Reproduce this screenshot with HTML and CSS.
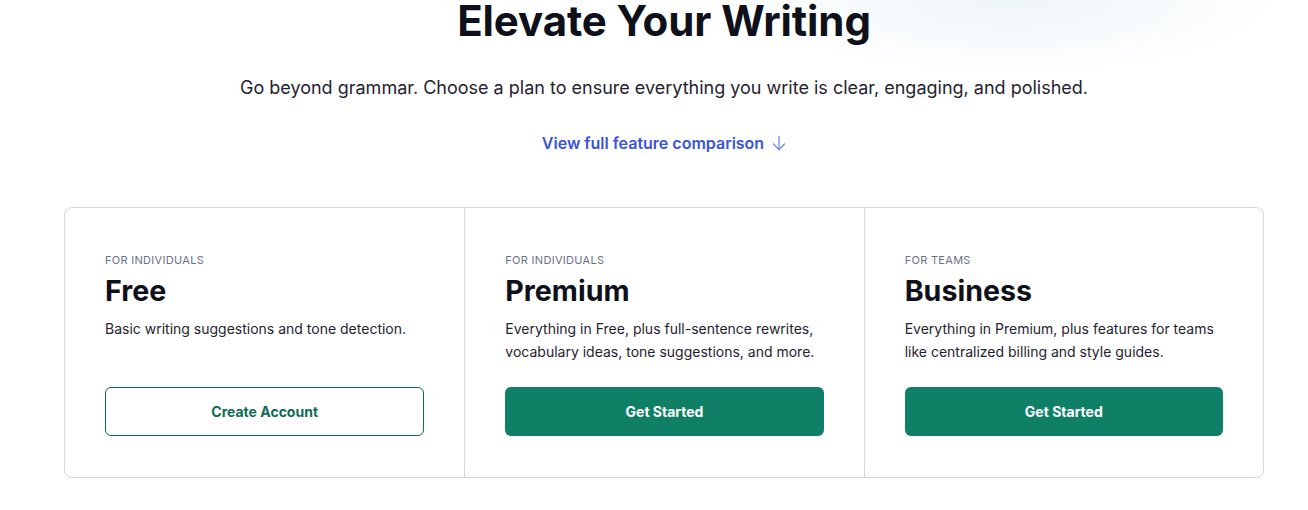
FILE: index.html
```html
<!DOCTYPE html>
<html lang="en">
<head>
<meta charset="utf-8">
<title>Plans</title>
<link rel="stylesheet" href="styles.css">
</head>
<body>
<main class="page">
  <header class="hero">
    <h1 class="hero-title">Elevate Your Writing</h1>
    <p class="hero-sub">Go beyond grammar. Choose a plan to ensure everything you write is clear, engaging, and polished.</p>
    <a class="compare-link" href="#">View full feature comparison
      <svg class="arrow" width="14" height="16" viewBox="0 0 14 16" fill="none" stroke="currentColor" stroke-width="1.3" stroke-linecap="round" stroke-linejoin="round"><path d="M7 1.5v13"/><path d="M1.5 9l5.5 5.5L12.5 9"/></svg>
    </a>
  </header>
  <section class="plans">
    <div class="plan">
      <div class="plan-label">For individuals</div>
      <h2 class="plan-name">Free</h2>
      <p class="plan-desc">Basic writing suggestions and tone detection.</p>
      <a class="btn btn-outline" href="#">Create Account</a>
    </div>
    <div class="plan">
      <div class="plan-label">For individuals</div>
      <h2 class="plan-name">Premium</h2>
      <p class="plan-desc">Everything in Free, plus full-sentence rewrites, vocabulary ideas, tone suggestions, and more.</p>
      <a class="btn btn-solid" href="#">Get Started</a>
    </div>
    <div class="plan">
      <div class="plan-label">For teams</div>
      <h2 class="plan-name">Business</h2>
      <p class="plan-desc">Everything in Premium, plus features for teams like centralized billing and style guides.</p>
      <a class="btn btn-solid" href="#">Get Started</a>
    </div>
  </section>
</main>
</body>
</html>
```
FILE: styles.css
```css
* { box-sizing: border-box; }
html, body { margin: 0; padding: 0; }
body {
  font-family: Inter, "Noto Sans", sans-serif;
  color: #0e101a;
  background: #fff;
  height: 510px;
  overflow: hidden;
  background-image: radial-gradient(ellipse 270px 75px at 1010px 0px, rgba(226, 238, 246, 0.6), rgba(255,255,255,0) 100%);
}
.page {
  display: flex;
  flex-direction: column;
  align-items: center;
  padding-left: 20px;
}
.hero {
  display: flex;
  flex-direction: column;
  align-items: center;
  margin-top: -6px;
}
.hero-title {
  margin: 0;
  font-size: 42px;
  line-height: 53px;
  font-weight: 700;
  letter-spacing: -0.1px;
  color: #0e101a;
}
.hero-sub {
  margin: 27px 0 0;
  font-size: 18px;
  line-height: 28px;
  color: #1f2330;
}
.compare-link {
  margin-top: 29px;
  display: flex;
  align-items: center;
  gap: 8px;
  font-size: 16px;
  font-weight: 600;
  color: #3a54d6;
  text-decoration: none;
  line-height: 24px;
}
.arrow { color: #6f86e6; }
.plans {
  margin-top: 52px;
  width: 1200px;
  display: grid;
  grid-template-columns: repeat(3, 1fr);
  border: 1px solid #d3d6e2;
  border-radius: 8px;
}
.plan {
  padding: 45px 40px 41px;
  display: flex;
  flex-direction: column;
}
.plan + .plan { border-left: 1px solid #d3d6e2; }
.plan-label {
  font-size: 11px;
  line-height: 14px;
  text-transform: uppercase;
  letter-spacing: 0.3px;
  color: #6b7185;
}
.plan-name {
  margin: 7px 0 0;
  font-size: 28.6px;
  line-height: 34px;
  font-weight: 700;
  color: #0e101a;
}
.plan-desc {
  margin: 9px 0 0;
  font-size: 14px;
  line-height: 23px;
  color: #1f2330;
  min-height: 46px;
}
.btn {
  margin-top: 24px;
  height: 49px;
  border-radius: 6px;
  display: flex;
  align-items: center;
  justify-content: center;
  font-size: 14px;
  font-weight: 700;
  text-decoration: none;
}
.btn-outline {
  border: 1px solid #0d6b55;
  color: #0d6b55;
  background: #fff;
}
.btn-solid {
  background: #0f7f66;
  color: #fff;
}
```
